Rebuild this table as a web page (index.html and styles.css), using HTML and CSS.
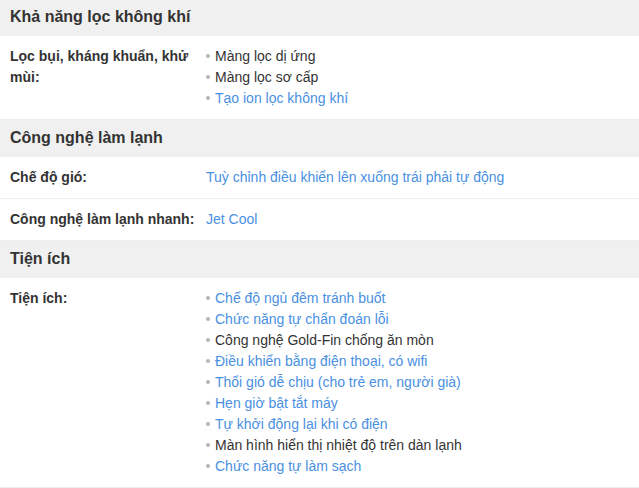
FILE: index.html
```html
<!DOCTYPE html>
<html lang="vi">
<head>
<meta charset="utf-8">
<link rel="stylesheet" href="styles.css">
</head>
<body>
<div class="specs">
  <div class="group-title">Khả năng lọc không khí</div>
  <div class="row">
    <div class="label">Lọc bụi, kháng khuẩn, khử mùi:</div>
    <ul class="value">
      <li>Màng lọc dị ứng</li>
      <li>Màng lọc sơ cấp</li>
      <li class="link">Tạo ion lọc không khí</li>
    </ul>
  </div>
  <div class="group-title">Công nghệ làm lạnh</div>
  <div class="row">
    <div class="label">Chế độ gió:</div>
    <div class="value link">Tuỳ chỉnh điều khiển lên xuống trái phải tự động</div>
  </div>
  <div class="row">
    <div class="label">Công nghệ làm lạnh nhanh:</div>
    <div class="value link">Jet Cool</div>
  </div>
  <div class="group-title">Tiện ích</div>
  <div class="row">
    <div class="label">Tiện ích:</div>
    <ul class="value">
      <li class="link">Chế độ ngủ đêm tránh buốt</li>
      <li class="link">Chức năng tự chẩn đoán lỗi</li>
      <li>Công nghệ Gold-Fin chống ăn mòn</li>
      <li class="link">Điều khiển bằng điện thoại, có wifi</li>
      <li class="link">Thổi gió dễ chịu (cho trẻ em, người già)</li>
      <li class="link">Hẹn giờ bật tắt máy</li>
      <li class="link">Tự khởi động lại khi có điện</li>
      <li>Màn hình hiển thị nhiệt độ trên dàn lạnh</li>
      <li class="link">Chức năng tự làm sạch</li>
    </ul>
  </div>
</div>
</body>
</html>
```

FILE: styles.css
```css
* { box-sizing: border-box; }
body {
  margin: 0;
  background: #fff;
  font-family: "Liberation Sans", Arial, sans-serif;
  font-size: 14px;
  color: #333;
}
.specs { width: 639px; }
.group-title {
  background: #f0f0f0;
  padding: 8px 10px 9px;
  line-height: 20px;
  font-size: 16px;
  font-weight: bold;
  color: #333;
}
.group-title:first-child { padding-top: 7px; }
.row {
  display: grid;
  grid-template-columns: 196px 1fr;
  padding: 10px 0;
  border-bottom: 1px solid #eee;
  line-height: 21px;
}
.label {
  padding-left: 10px;
  font-weight: bold;
  color: #333;
}
.value {
  margin: 0;
  padding: 0 0 0 10px;
  list-style: none;
}
.value li::before {
  content: "";
  display: inline-block;
  width: 4px;
  height: 4px;
  border-radius: 50%;
  background: #b5b5b5;
  margin-right: 5px;
  vertical-align: middle;
  position: relative;
  top: -1px;
}
.link { color: #4a90e2; }
```
